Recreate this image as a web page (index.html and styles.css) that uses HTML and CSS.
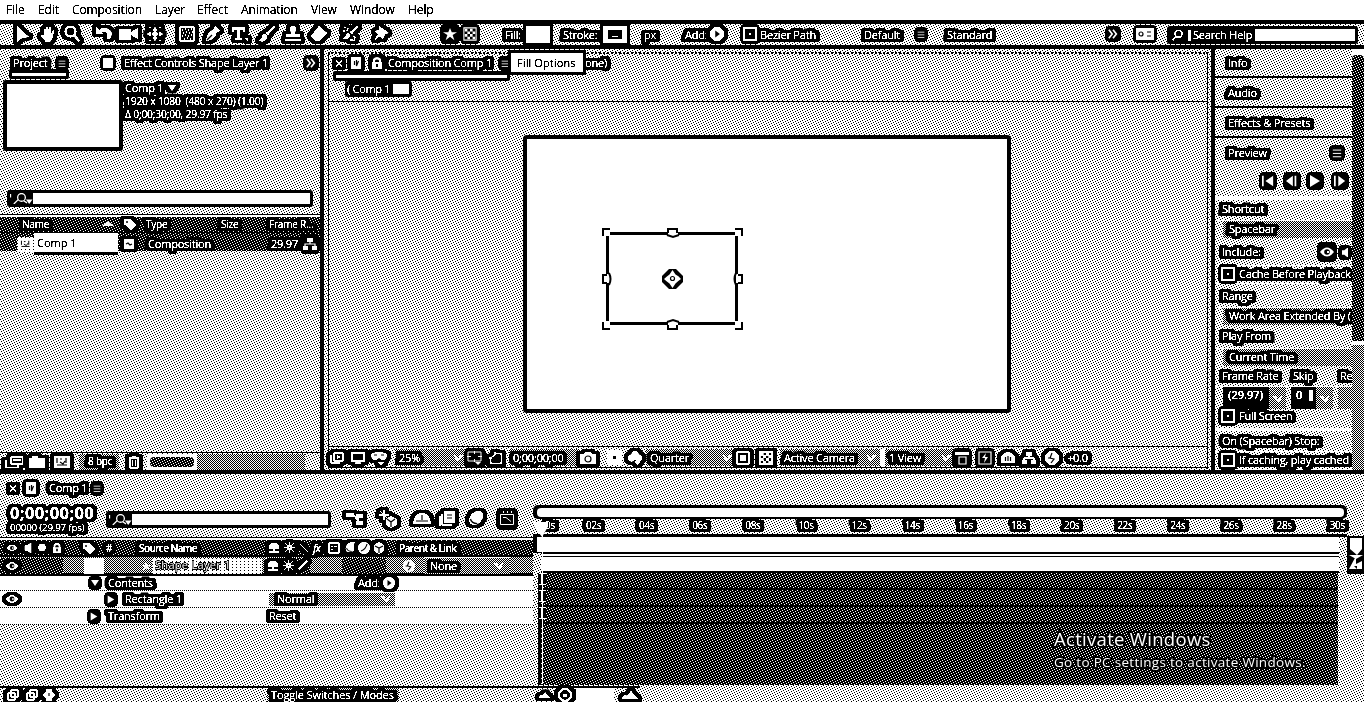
FILE: index.html
```html
<!DOCTYPE html>
<html lang="en">
<head>
<meta charset="utf-8">
<title>Comp 1</title>
<link rel="stylesheet" href="styles.css">
</head>
<body>
<svg class="defs" aria-hidden="true">
  <filter id="halo" x="-50%" y="-50%" width="200%" height="200%" color-interpolation-filters="sRGB">
    <feComponentTransfer in="SourceGraphic" result="s"><feFuncA type="linear" slope="9" intercept="-2.7"/></feComponentTransfer>
    <feColorMatrix in="s" values="0 0 0 0 0  0 0 0 0 0  0 0 0 0 0  0 0 0 1 0" result="a"/>
    <feMorphology in="a" operator="dilate" radius="4 2" result="d1"/>
    <feMorphology in="a" operator="dilate" radius="3 3" result="d2"/>
    <feMerge><feMergeNode in="d1"/><feMergeNode in="d2"/><feMergeNode in="s"/></feMerge>
  </filter>
  <filter id="crisp" color-interpolation-filters="sRGB"><feComponentTransfer><feFuncA type="linear" slope="9" intercept="-2.7"/></feComponentTransfer></filter>
  <symbol id="arrow" viewBox="0 0 16 16"><path d="M2 0v16l5-4 7-1z"/></symbol>
  <symbol id="hand" viewBox="0 0 16 16"><path d="M4 9V3q1-1 2 0v4V1q1-1 2 0v6l1-6q1-1 2 0v7l2-4q2 0 1 2l-2 7-2 3H6L1 10q0-2 3-1z"/></symbol>
  <symbol id="mag" viewBox="0 0 16 16"><circle cx="6.500" cy="5.500" r="5" class="ln"/><path d="M10 9l5 6" class="ln"/></symbol>
  <symbol id="rot" viewBox="0 0 16 16"><path d="M0 1v7h7L5 6q6-2 6 3v4h3q5-9-5-11-4 0-6 2z"/></symbol>
  <symbol id="cam" viewBox="0 0 20 16"><path d="M0 3h12v3l7-4v11l-7-4v5H0z"/></symbol>
  <symbol id="pan" viewBox="0 0 18 16"><path d="M9 0l3 4H6zM9 16l-3-4h6zM0 8l4-3v6zM18 8l-4-3v6z"/><circle cx="9" cy="8" r="3"/><path d="M2 1h2M14 1h2M2 15h2M14 15h2" class="l1"/></symbol>
  <symbol id="rect" viewBox="0 0 16 16"><path d="M1 1h14v14H1z" class="l1"/><path d="M3 4h1M6 3h1M9 4h1M12 3h1M4 7h1M7 6h1M10 7h1M13 6h1M3 10h1M6 9h1M9 10h1M12 9h1M5 13h1M8 12h1M11 13h1" class="l1"/></symbol>
  <symbol id="pen" viewBox="0 0 16 16"><path d="M10 0l5 5-4 2q0 6-9 8l-1-1Q3 5 8 4z"/><path d="M2 14l5-5" class="k"/></symbol>
  <symbol id="type" viewBox="0 0 16 16"><path d="M0 1h13v5h-2V4H8v8h2v2H3v-2h2V4H2v2H0zM13 12h3v3z"/></symbol>
  <symbol id="brush" viewBox="0 0 16 16"><path d="M15 0l-8 7 2 2 7-8zM6 8q-3 0-3 4l-3 3q8 2 8-5z"/></symbol>
  <symbol id="stamp" viewBox="0 0 16 16"><path d="M5 1q3-2 6 0l-1 7h5v3H1V8h5zM0 13h16v2H0z"/></symbol>
  <symbol id="eraser" viewBox="0 0 16 16"><path d="M8 0l8 7-8 8H5L0 10z"/></symbol>
  <symbol id="roto" viewBox="0 0 16 16"><path d="M15 0l-7 6 2 2 6-7zM7 7q-3 0-3 3l-3 3q7 1 7-4z"/><path d="M2 1l2 1M1 5h2M6 2l-1 3M11 10l2 1-1 4M8 14h3" class="l1"/></symbol>
  <symbol id="pin" viewBox="0 0 16 16"><path d="M6 0l10 7-4 1-2 5-3-3-6 5 4-7-3-3 4-1z"/></symbol>
  <symbol id="star" viewBox="0 0 16 16"><path d="M8 1l2 5h6l-5 3 2 6-5-4-5 4 2-6-5-3h6z"/></symbol>
  <symbol id="check" viewBox="0 0 16 16"><path d="M1 1h14v14H1z" class="l1"/><path d="M2 2h3v3H2zM8 2h3v3H8zM5 5h3v3H5zM11 5h3v3h-3zM2 8h3v3H2zM8 8h3v3H8zM5 11h3v3H5zM11 11h3v3h-3z"/></symbol>
  <symbol id="menu" viewBox="0 0 12 12"><path d="M1 2.500h10M1 6.500h10M1 10.500h10" class="l1"/></symbol>
  <symbol id="more" viewBox="0 0 12 12"><path d="M1 1l4 5-4 5M6 1l4 5-4 5" class="ln"/></symbol>
  <symbol id="play" viewBox="0 0 12 12"><circle cx="6" cy="6" r="6"/><path d="M4.500 3v6l4-3z" class="kf"/></symbol>
  <symbol id="cb" viewBox="0 0 14 14"><path d="M1 1h12v12H1z" class="ln"/><path d="M6 6h2v2H6z"/></symbol>
  <symbol id="sq" viewBox="0 0 10 10"><path d="M0 0h10v10H0z"/></symbol>
  <symbol id="wave" viewBox="0 0 10 10"><path d="M0 0h10v10H0z"/><path d="M2 5l2-1 2 2 2-1" class="k"/></symbol>
  <symbol id="tabi" viewBox="0 0 12 12"><path d="M1 0h10v12H1z"/><path d="M4.500 4v4M6.500 3v6l2-5" class="k"/></symbol>
  <symbol id="x" viewBox="0 0 8 8"><path d="M1 1l6 6M7 1L1 7" class="l1"/></symbol>
  <symbol id="lock" viewBox="0 0 12 12"><path d="M2 5V2q4-4 8 0v3h1v7H1V5z"/><path d="M4 5V3.500q2-2 4 0V5zM5 7h2v3H5z" class="kf"/></symbol>
  <symbol id="search" viewBox="0 0 20 10"><circle cx="10" cy="4" r="3.500" class="l1"/><path d="M7 6L3 10M12 7l3 2M0 1v3" class="l1"/><path d="M14 6h6l-3 4z"/></symbol>
  <symbol id="tag" viewBox="0 0 14 12"><path d="M1 1h6l6 6-5 5-7-6z"/><circle cx="4" cy="4" r="1" class="kf"/></symbol>
  <symbol id="up" viewBox="0 0 12 5"><path d="M0 5l6-5 6 5z"/></symbol>
  <symbol id="tree" viewBox="0 0 14 14"><path d="M4 1h6v4H4zM0 9h5v4H0zM9 9h5v4H9z"/><path d="M7 4v3M2 10V7h10v3" class="l1"/></symbol>
  <symbol id="foot" viewBox="0 0 18 12"><path d="M6 1h12v7H6zM1 4v8h12V9" class="l1"/><path d="M8 4h8" class="ln"/></symbol>
  <symbol id="folder" viewBox="0 0 16 12"><path d="M0 2h3V0h6v2h7v10H0z"/></symbol>
  <symbol id="img" viewBox="0 0 16 12"><path d="M0 0h16v12H0z"/><path d="M3 2v5M6 3h2M12 2v5M3 9h10M6 6l3 2 2-3" class="k"/></symbol>
  <symbol id="trash" viewBox="0 0 12 14"><path d="M1 3h10M4 2h4M2 4v9h8V4M4.500 5v6M7.500 5v6" class="l1"/></symbol>
  <symbol id="mon" viewBox="0 0 16 14"><path d="M1 1h14v9H1z" class="ln"/><path d="M5 12h6v2H5z"/></symbol>
  <symbol id="stack" viewBox="0 0 14 12"><path d="M4 1h9v8H4zM1 3v8h9" class="l1"/><path d="M7 3v4l4-2z"/></symbol>
  <symbol id="mask" viewBox="0 0 16 14"><path d="M0 3q8-4 16 0 0 6-5 6L8 7 5 9Q0 9 0 3z"/><path d="M3 4h3M10 4h3" class="k"/><path d="M7 11h6l-3 3z"/></symbol>
  <symbol id="crop" viewBox="0 0 16 14"><path d="M1 1h13v9H1zM7.500 0v3M7.500 8v3M0 5.500h4M11 5.500h4" class="thin"/><path d="M8 11h6l-3 3z"/></symbol>
  <symbol id="region" viewBox="0 0 16 14"><path d="M2 13V7l6-5h6v11zM0 7h3M7 0v3" class="l1"/></symbol>
  <symbol id="photo" viewBox="0 0 16 12"><path d="M0 2h4l1-2h6l1 2h4v10H0z"/><circle cx="8" cy="7" r="3" class="k"/></symbol>
  <symbol id="club" viewBox="0 0 16 16"><circle cx="8" cy="4" r="4"/><circle cx="4" cy="8" r="4"/><circle cx="12" cy="8" r="4"/><path d="M7 12h7l-3 4z"/></symbol>
  <symbol id="view" viewBox="0 0 14 14"><path d="M1 1h12v12H1z" class="l1"/><path d="M4 4h6v6H4z"/></symbol>
  <symbol id="dup" viewBox="0 0 14 14"><path d="M0 1h14v3H0z"/><path d="M4 6h7v7H4z" class="l1"/></symbol>
  <symbol id="bolt" viewBox="0 0 14 14"><path d="M1 1h12v12H1z" class="l1"/><path d="M8 2L4 7h3l-1 5 4-6H7z"/></symbol>
  <symbol id="bars" viewBox="0 0 14 14"><path d="M0 6q7-10 14 0v6H0z"/><path d="M4.500 6v4M7 5v5M9.500 6v4" class="k"/></symbol>
  <symbol id="iris" viewBox="0 0 14 14"><circle cx="7" cy="7" r="7"/><path d="M7 2L5 7l4 1-3 4M3 7h3" class="k"/></symbol>
  <symbol id="first" viewBox="0 0 14 12"><path d="M0 0h2v12H0zM13 0v12L4 6z"/></symbol>
  <symbol id="prev" viewBox="0 0 14 12"><path d="M8 0v12L0 6zM10 0h2v12h-2z"/></symbol>
  <symbol id="tri" viewBox="0 0 12 12"><path d="M1 0l10 6-10 6z"/></symbol>
  <symbol id="next" viewBox="0 0 14 12"><path d="M0 0h2v12H0zM5 0l8 6-8 6z"/></symbol>
  <symbol id="eye" viewBox="0 0 14 10"><path d="M0 5q7-9 14 0-7 9-14 0z"/><circle cx="7" cy="5" r="2.800" class="kf"/><path d="M7 4h2v2H7z"/></symbol>
  <symbol id="spk" viewBox="0 0 8 12"><path d="M0 3h3l5-4v14L3 9H0z"/></symbol>
  <symbol id="down" viewBox="0 0 8 6"><path d="M0 0h8L4 6z"/></symbol>
  <symbol id="chev" viewBox="0 0 10 6"><path d="M1 0l4 5 4-5" class="ln"/></symbol>
  <symbol id="shy" viewBox="0 0 14 12"><path d="M1 7q0-7 6-7t6 7H8v3h5v2H1v-2h5V7z"/></symbol>
  <symbol id="sun" viewBox="0 0 11 11"><path d="M5 0h1v3h2l1-2h1v1L8 3v2h3v1H8v2l2 1v1H9L8 8H6v3H5V8H3l-1 2H1V9l2-1V6H0V5h3V3L1 2V1h1l1 2h2z"/><path d="M5 5h1v1H5z" class="kf"/></symbol>
  <symbol id="slash" viewBox="0 0 12 12"><path d="M1 11L11 1" class="ln"/></symbol>
  <symbol id="bslash" viewBox="0 0 12 12"><path d="M1 1l10 10" class="l1"/></symbol>
  <symbol id="frame" viewBox="0 0 12 12"><path d="M1 1h10v10H1z" class="l1"/><path d="M3 4h2v1H3zM6 4h3v1H6zM3 7h2v1H3z"/></symbol>
  <symbol id="blob" viewBox="0 0 14 14"><ellipse cx="8" cy="6" rx="7" ry="5" transform="rotate(-45 8 6)"/><path d="M3 7q1 4 6 4" class="k"/></symbol>
  <symbol id="half" viewBox="0 0 12 12"><circle cx="6" cy="6" r="6"/><path d="M9 2q-1 5-6 7" class="k"/></symbol>
  <symbol id="dot" viewBox="0 0 12 12"><circle cx="6" cy="6" r="5.500"/></symbol>
  <symbol id="cube" viewBox="0 0 12 12"><path d="M6 0l5 3v6l-5 3-5-3V3z"/><path d="M2 4l4 2 4-2M6 6v5" class="k"/></symbol>
  <symbol id="flow" viewBox="0 0 18 14"><path d="M0 1h8v4H0zM10 2h7v4h-7zM10 9h7v4h-7z"/><path d="M8 3l5 8M12 6v4" class="l1"/></symbol>
  <symbol id="draft" viewBox="0 0 18 18"><path d="M5 0v10M0 5h10M1 1l8 8" class="thin"/><path d="M12 6l6 3v6l-6 3-5-3V9z"/><path d="M8 9l4 3 4-3M12 12v5" class="k"/></symbol>
  <symbol id="dome" viewBox="0 0 18 14"><path d="M0 12Q1 1 9 1t9 11z"/><path d="M9 3v5M3 9h12" class="k"/></symbol>
  <symbol id="pages" viewBox="0 0 16 16"><path d="M5 0h11v12H5z"/><path d="M3 3v11h10M1 5v10" class="l1"/><path d="M8 4h5M8 7h5" class="k"/></symbol>
  <symbol id="graph" viewBox="0 0 16 16"><path d="M1.500 3.500h13v10h-13zM4 6.500h3l5 4M4.500 0v2M8.500 0v2M12.500 0v2" class="thin"/></symbol>
  <symbol id="mtn" viewBox="0 0 16 8"><path d="M0 8q2-6 5-3l4-5 7 8z"/></symbol>
  <symbol id="ring" viewBox="0 0 14 14"><circle cx="7" cy="7" r="6" class="ln"/><path d="M5 6h4v3H5z"/></symbol>
  <symbol id="sb" viewBox="0 0 12 12"><path d="M1 4h7v7H1zM4 1h7v7H4z" class="l1"/></symbol>
  <symbol id="key" viewBox="0 0 12 12"><path d="M3 0h6v3l3 3-3 3v3H3V9L0 6l3-3z"/><path d="M6 4v3" class="k"/></symbol>
  <symbol id="ws" viewBox="0 0 18 12"><path d="M0 0h18v12H0z"/><circle cx="5" cy="6" r="2" class="k"/><path d="M11 4h4M11 8h4" class="k"/></symbol>
</svg>

<nav class="menu"><span>File</span><span>Edit</span><span>Composition</span><span>Layer</span><span>Effect</span><span>Animation</span><span>View</span><span>Window</span><span>Help</span></nav>

<header class="tools light">
  <svg class="i"><use href="#arrow"/></svg><svg class="i"><use href="#hand"/></svg><svg class="i"><use href="#mag"/></svg><svg class="i"><use href="#rot"/></svg><svg class="i w20"><use href="#cam"/></svg><svg class="i"><use href="#pan"/></svg><svg class="i"><use href="#rect"/></svg><svg class="i"><use href="#pen"/></svg><svg class="i"><use href="#type"/></svg><svg class="i"><use href="#brush"/></svg><svg class="i"><use href="#stamp"/></svg><svg class="i"><use href="#eraser"/></svg><svg class="i"><use href="#roto"/></svg><svg class="i"><use href="#pin"/></svg><svg class="i s14 bb"><use href="#star"/></svg><svg class="i s14 bb"><use href="#check"/></svg>
  <span class="t">Fill:</span><i class="swatch"></i><span class="t">Stroke:</span><i class="swatch stroke"></i><span class="t">px</span><span class="t">Add:</span><svg class="i s14"><use href="#play"/></svg><svg class="i s14 bb"><use href="#cb"/></svg><span class="t">Bezier Path</span><span class="t">Default</span><svg class="i s8 bb"><use href="#menu"/></svg><span class="t">Standard</span><svg class="i s10 bb"><use href="#more"/></svg><svg class="i ws bb"><use href="#ws"/></svg>
  <div class="help"><svg class="i"><use href="#mag"/></svg><b></b><span>Search Help</span><em></em></div>
</header>

<main class="top">
  <section class="project light">
    <div class="ptabs"><span class="t">Project</span><svg class="i s8 bb"><use href="#menu"/></svg><svg class="i s10 bb"><use href="#sq"/></svg><span class="t">Effect Controls Shape Layer 1</span><svg class="i s10 bb"><use href="#more"/></svg></div>
    <div class="under u1"></div>
    <div class="info"><div class="thumb"></div><div class="meta"><div><span class="t">Comp 1</span><svg class="i s8 dnt"><use href="#down"/></svg></div><span class="t">1920 x 1080&nbsp; (480 x 270) (1.00)</span><span class="t">Δ 0;00;30;00, 29.97 fps</span></div></div>
    <div class="find f1"><svg><use href="#search"/></svg><b></b></div>
    <div class="cols dark"><span class="n">Name</span><svg class="up"><use href="#up"/></svg><svg class="i s14"><use href="#tag"/></svg><span class="n">Type</span><span class="n">Size</span><span class="n">Frame R...</span></div>
    <div class="item dark"><i class="pale"><svg><use href="#img"/></svg></i><span class="name"><span>Comp 1</span></span><svg class="i s10"><use href="#wave"/></svg><span class="n">Composition</span><span class="n">29.97</span><svg class="i s14 bb"><use href="#tree"/></svg></div>
    <div class="pfoot"><svg class="i foot"><use href="#foot"/></svg><svg class="i s16"><use href="#folder"/></svg><svg class="i s16"><use href="#img"/></svg><i class="mid"><span class="n">8 bpc</span></i><svg class="i s14"><use href="#trash"/></svg><i class="slot"><b class="dark"></b></i><i class="mid"></i></div>
  </section>

  <section class="comp light">
    <div class="inner">
      <div class="ctabs"><svg class="i s8"><use href="#x"/></svg><svg class="i s12 bb"><use href="#tabi"/></svg><svg class="i s12 bb"><use href="#lock"/></svg><span class="t">Composition Comp 1</span><svg class="i s8 bb"><use href="#menu"/></svg><span class="t">one)</span></div>
      <div class="under u2"></div>
      <div class="crumb"><span>( Comp 1</span><b></b></div>
      <div class="stage">
        <div class="canvas">
          <svg class="shape" viewBox="0 0 142 102"><path d="M5.500 5.500h129v90h-129z" class="ks"/><path class="wf" d="M2 2h6v6H2zM66 2h10v5H66zM133 2h6v6h-6zM2 46h5v9H2zM134 46h5v9h-5zM2 93h6v6H2zM66 94h10v5H66zM133 93h6v6h-6z"/><path class="k1" d="M1 8V1h7M66 5V1h9v4M133 1h7v7M5 47H1v8h4M136 47h4v8h-4M1 94v7h7M66 97v4h9v-4M133 101h7v-7M65 7l6 2 6-2M7 45q3 6 0 12M134 45q-3 6 0 12M65 94l6-2 6 2"/><path d="M67 41h7l7 7v6l-7 7h-7l-7-7v-6z" class="kf"/><path d="M70.500 42l3 4.500q3 1 5.500 4.500-3 2-5.500 4.500l-3 4.500-3-4.500q-3-2-5.500-4.500 3-3 5.500-4.500z" class="wf"/><circle cx="70.500" cy="50.500" r="2" class="k"/></svg>
        </div>
      </div>
      <div class="cfoot"><svg class="i s14"><use href="#stack"/></svg><svg class="i s14"><use href="#mon"/></svg><svg class="i s16"><use href="#mask"/></svg><i class="mid"><span class="t">25%</span><svg><use href="#chev"/></svg></i><svg class="i s16 bb"><use href="#crop"/></svg><svg class="i s14"><use href="#region"/></svg><i class="mid"><span class="t">0;00;00;00</span></i><svg class="i s16"><use href="#photo"/></svg><i class="pt"></i><svg class="i s14"><use href="#club"/></svg><i class="mid"><span class="t">Quarter</span><svg><use href="#chev"/></svg></i><svg class="i s14"><use href="#view"/></svg><svg class="i s14"><use href="#check"/></svg><i class="mid"><span class="t">Active Camera</span><svg><use href="#chev"/></svg></i><i class="mid"><span class="t">1 View</span><svg><use href="#chev"/></svg></i><svg class="i s14 bb"><use href="#dup"/></svg><svg class="i s14 bb"><use href="#bolt"/></svg><svg class="i s14"><use href="#bars"/></svg><svg class="i s14"><use href="#tree"/></svg><svg class="i s14"><use href="#iris"/></svg><span class="t">+0.0</span></div>
    </div>
    <div class="tip"><span>Fill Options</span></div>
  </section>

  <aside class="side light">
    <div class="panels">
      <div class="sec"><span class="t">Info</span></div><div class="sec"><span class="t">Audio</span></div><div class="sec"><span class="t">Effects &amp; Presets</span></div>
      <div class="sec last"><span class="t">Preview</span><svg class="i s10 bb"><use href="#menu"/></svg></div>
      <div class="trans"><svg class="i s12 bb"><use href="#first"/></svg><svg class="i s12 bb"><use href="#prev"/></svg><svg class="i s12 bb"><use href="#tri"/></svg><svg class="i s12 bb"><use href="#next"/></svg></div>
      <div class="r r18"><span class="t">Shortcut</span></div>
      <div class="drop mid"><span class="t">Spacebar</span></div>
      <div class="r incl"><span class="t">Include:</span><svg class="i s14 bb"><use href="#eye"/></svg><svg class="i s8 bb"><use href="#spk"/></svg></div>
      <div class="r ck"><svg class="i s14 bb"><use href="#cb"/></svg><span class="t">Cache Before Playback</span></div>
      <div class="r rng"><span class="t">Range</span></div>
      <div class="drop mid"><span class="t">Work Area Extended By (</span></div>
      <div class="r r24"><span class="t">Play From</span></div>
      <div class="drop mid"><span class="t">Current Time</span></div>
      <div class="r three"><span class="t">Frame Rate</span><span class="t">Skip</span><span class="t">Re</span></div>
      <div class="nums"><b><span>(29.97)</span></b><i class="mid"><svg><use href="#chev"/></svg></i><b><span>0</span><em></em></b><i class="mid"><svg><use href="#chev"/></svg></i><i class="mid"></i></div>
      <div class="r ck full"><svg class="i s14 bb"><use href="#cb"/></svg><span class="t">Full Screen</span></div>
      <div class="r stop"><span class="t">On (Spacebar) Stop:</span></div>
      <div class="r ck fin"><svg class="i s14 bb"><use href="#cb"/></svg><span class="t">If caching, play cached</span></div>
    </div>
    <div class="scroll"><b class="dark"></b><i class="mid"></i></div>
  </aside>
</main>

<section class="timeline light">
  <div class="left">
    <div class="ttab"><svg class="i s8"><use href="#x"/></svg><svg class="i s12 bb"><use href="#tabi"/></svg><span class="t">Comp 1</span><svg class="i s8 bb"><use href="#menu"/></svg></div>
    <div class="tctl"><div class="tc"><span class="t big">0;00;00;00</span><span class="t tiny">00000 (29.97 fps)</span></div><div class="find f2"><svg><use href="#search"/></svg><b></b></div><svg class="i s18"><use href="#flow"/></svg><svg class="i s18"><use href="#draft"/></svg><svg class="i s18"><use href="#dome"/></svg><svg class="i s16"><use href="#pages"/></svg><svg class="i s16"><use href="#blob"/></svg><svg class="i s16 bb"><use href="#graph"/></svg></div>
    <div class="lhead dark"><svg class="i s10"><use href="#eye"/></svg><svg class="i s10"><use href="#spk"/></svg><svg class="i s8"><use href="#dot"/></svg><svg class="i s10"><use href="#lock"/></svg><svg class="i s14"><use href="#tag"/></svg><span class="n">#</span><span class="n">Source Name</span><svg class="i s12"><use href="#shy"/></svg><svg class="i s11"><use href="#sun"/></svg><svg class="i s10"><use href="#bslash"/></svg><em class="n">fx</em><svg class="i s12"><use href="#frame"/></svg><svg class="i s12"><use href="#blob"/></svg><svg class="i s12"><use href="#half"/></svg><svg class="i s12"><use href="#cube"/></svg><span class="n">Parent &amp; Link</span></div>
    <div class="lrow mid"><i class="c dark"><svg class="i s12"><use href="#eye"/></svg></i><i class="c dark blk"></i><i class="wh"></i><svg class="i s10 nf"><use href="#star"/></svg><i class="pale nm"><span>Shape Layer 1</span></i><i class="c dark sw"><svg class="i s12"><use href="#shy"/></svg><svg class="i s11"><use href="#sun"/></svg><svg class="i s10"><use href="#slash"/></svg></i><i class="c dark blk2"></i><svg class="i s12 nf"><use href="#iris"/></svg><i class="mid par"><span class="t">None</span><svg><use href="#chev"/></svg></i></div>
    <div class="prop p1"><svg class="i s8 dn bb"><use href="#down"/></svg><span class="t">Contents</span><span class="t">Add:</span><svg class="i s12"><use href="#play"/></svg></div>
    <div class="prop p2"><svg class="i s12"><use href="#eye"/></svg><svg class="i s8 bb"><use href="#tri"/></svg><span class="t">Rectangle 1</span><i class="mid"><span class="t">Normal</span><svg><use href="#chev"/></svg></i></div>
    <div class="prop p3"><svg class="i s8 bb"><use href="#tri"/></svg><span class="t">Transform</span><span class="t">Reset</span></div>
    <div class="tfoot"><svg class="i s12"><use href="#sb"/></svg><svg class="i s12"><use href="#sb"/></svg><svg class="i s12"><use href="#key"/></svg><i class="mid"><span class="t">Toggle Switches / Modes</span></i></div>
  </div>
  <div class="right">
    <div class="nav"><b></b></div>
    <div class="ruler"><span class="t">0s</span><span class="t">02s</span><span class="t">04s</span><span class="t">06s</span><span class="t">08s</span><span class="t">10s</span><span class="t">12s</span><span class="t">14s</span><span class="t">16s</span><span class="t">18s</span><span class="t">20s</span><span class="t">22s</span><span class="t">24s</span><span class="t">26s</span><span class="t">28s</span><span class="t">30s</span></div>
    <div class="work"></div>
    <div class="layerbar"></div>
    <div class="tracks dark"><i></i><i></i><i></i><div class="act"><span class="a1">Activate Windows</span><span class="a2">Go to PC settings to activate Windows.</span></div></div>
    <div class="zoombar"><svg class="i mt"><use href="#mtn"/></svg><svg class="i s14"><use href="#ring"/></svg><b></b><svg class="i mt2"><use href="#mtn"/></svg></div>
    <div class="cti"></div>
  </div>
  <div class="gutter"><svg viewBox="0 0 17 38" preserveAspectRatio="none"><path d="M0 0h17v38H0z" class="kf"/><path d="M3 2h12v11l-5 6-7-6zM2 19l7 4 7-4M9 20l-7 13h13v-8l-6 3M7 30h3v3"/></svg></div>
</section>
</body>
</html>
```
FILE: styles.css
```css
* { box-sizing: border-box; }
body { margin: 0; width: 1364px; height: 702px; overflow: hidden; background: #fff; color: #000; font: 11px/14px "Open Sans", "Noto Sans", sans-serif; }
i { font-style: normal; }
i, b { display: block; }
.defs { position: absolute; width: 0; height: 0; }

/* one-pixel screens of three densities */
.light { --k: conic-gradient(at 1px 1px, #0000 75%, #000 0); background: var(--k) 0 0/5px 5px, var(--k) 1px 2px/5px 5px, var(--k) 2px 4px/5px 5px, var(--k) 3px 1px/5px 5px, var(--k) 4px 3px/5px 5px, #fff; }
.dark { --w: conic-gradient(at 1px 1px, #0000 75%, #fff 0); background: var(--w) 0 0/5px 5px, var(--w) 1px 2px/5px 5px, var(--w) 2px 4px/5px 5px, var(--w) 3px 1px/5px 5px, var(--w) 4px 3px/5px 5px, #000; }
.mid { background: conic-gradient(#000 25%, #fff 0 50%, #000 0 75%, #fff 0) 0 0/2px 2px; }
.pale { background: conic-gradient(at 1px 1px, #fff 75%, #000 0) 0 0/4px 3px; }

.i { width: 16px; height: 16px; overflow: visible; fill: #fff; filter: url(#halo); display: block; }
.i.w20 { width: 20px; }
.i.ws { width: 18px; height: 12px; margin-left: -2px; }
.i.s18 { width: 18px; height: 18px; }
.i.s14 { width: 14px; height: 14px; }
.i.s12 { width: 12px; height: 12px; }
.i.s11 { width: 11px; height: 11px; }
.i.s10 { width: 10px; height: 10px; }
.i.s8 { width: 8px; height: 9px; }
.i.bb { filter: url(#crisp); background: #000; box-shadow: 0 0 0 3px #000; border-radius: 2px; }
.i.nf { filter: url(#crisp); }
.ln { fill: none; stroke: #fff; stroke-width: 2; }
.l1 { fill: none; stroke: #fff; stroke-width: 1.2; }
.thin { fill: none; stroke: #fff; stroke-width: 1; }
.k { fill: none; stroke: #000; stroke-width: 1.2; }
.kf { fill: #000; }
.t, .n { color: #fff; white-space: nowrap; justify-self: start; filter: url(#halo); letter-spacing: -.2px; }
.n { font-size: 10px; }
.mid > svg:not(.i) { width: 10px; height: 6px; filter: url(#crisp); }

.menu { height: 24px; border-bottom: 4px solid #000; display: grid; grid-template-columns: 32px 34px 83px 42px 44px 70px 39px 58px 40px; padding-left: 6px; align-items: center; font-size: 12px; }
.menu span { filter: url(#crisp); letter-spacing: -.1px; }

.tools { height: 25px; border-bottom: 4px solid #000; padding: 0 0 2px 15px; display: grid; align-items: center; grid-template-columns: 25px 24px 32px 23px 28px 32px 26px 27px 27px 26px 26px 31px 31px 70px 20px 42px 21px 37px 40px 41px 41px 25px 33px 17px 104px 53px 30px 161px 30px 29px 191px; }
.tools .t { position: relative; top: 0; margin-top: 1px; }
.swatch { width: 24px; height: 17px; background: #fff; outline: 3px solid #000; }
.swatch.stroke { border: 5px solid #fff; border-width: 4px 5px; background: repeating-linear-gradient(#000 0 4px, #fff 4px 5px) content-box, #000; padding: 2px 4px; }
.help { height: 18px; width: 191px; border: 3px solid #000; border-radius: 3px; background: #000; display: flex; align-items: center; color: #fff; margin-top: 2px; }
.help .i { width: 11px; height: 11px; transform: scaleX(-1); margin: 0 5px 0 2px; }
.help b { width: 3px; height: 11px; background: #fff; margin-right: 2px; }
.help span { filter: url(#crisp); letter-spacing: -.2px; }
.help em { flex: 1; height: 12px; background: #fff; margin-left: 3px; }

.top { display: grid; grid-template-columns: 324px 891px 149px; height: 425px; border-bottom: 4px solid #000; }
.project { border-right: 4px solid #000; height: 421px; display: flex; flex-direction: column; }
.ptabs { height: 20px; padding: 7px 0 0 13px; display: grid; align-items: center; grid-template-columns: 45px 45px 21px 182px 12px; }
.ptabs .t { letter-spacing: -.2px; }
.under { height: 10px; border: solid #000; border-width: 4px 3px 3px; background: #fff; border-radius: 2px; }
.u1 { margin-left: 9px; width: 60px; }
.info { display: flex; height: 72px; margin-top: 1px; padding-left: 3px; }
.thumb { width: 120px; height: 71px; border: 4px solid #000; background: #fff; border-radius: 3px; }
.meta { padding: 1px 0 0 2px; display: flex; flex-direction: column; align-items: start; }
.meta > * { height: 13px; line-height: 14px; font-size: 10.300px; }
.meta > div { display: flex; gap: 5px; align-items: center; font-size: 11px; }
.meta .dnt { height: 6px; }
.find { background: #000; border-radius: 3px; border: 3px solid #000; display: flex; }
.find svg { width: 23px; height: 11px; fill: #fff; }
.find b { background: #fff; flex: 1; }
.f1 { margin: 38px 0 0 7px; width: 306px; height: 17px; }
.cols { margin-top: 7px; height: 18px; border-top: 1px solid #000; box-shadow: inset 0 2px #fff; padding-left: 22px; display: grid; align-items: center; grid-template-columns: 80px 21px 23px 75px 48px 50px; }
.cols .up { width: 12px; height: 5px; fill: #fff; }
.item { height: 19px; border-top: 1px solid #000; padding-left: 17px; display: grid; align-items: center; grid-template-columns: 17px 90px 24px 123px 32px 14px; }
.item .pale { height: 15px; width: 17px; padding: 2px; }
.item .pale svg { width: 13px; height: 10px; fill: #fff; display: block; }
.name { background: #fff; width: 84px; height: 22px; border-bottom: 3px solid #000; padding: 3px 0 0 3px; align-self: start; }
.name span { filter: url(#crisp); display: block; }
.item .n { font-size: 11px; }
.pfoot { margin-top: auto; height: 18px; border-top: 1px solid #000; display: grid; align-items: center; grid-template-columns: 24px 25px 26px 47px 21px 50px 108px; padding-left: 4px; }
.pfoot > .i { margin-left: 1px; }
.pfoot .foot { width: 18px; height: 12px; }
.pfoot > .mid { height: 16px; width: 40px; padding-left: 9px; }
.pfoot > .mid:last-child { width: 108px; }
.slot { background: #fff; height: 16px; padding: 3px 3px; }
.slot b { height: 10px; border-radius: 4px; }

.comp { position: relative; height: 421px; border-right: 4px solid #000; padding: 3px 3px 1px 4px; }
.inner { border: 1px solid #000; border-top: 2px dotted #000; border-bottom: 0; height: 417px; display: flex; flex-direction: column; }
.ctabs { height: 17px; padding: 1px 0 0 6px; display: grid; align-items: center; grid-template-columns: 15px 21px 17px 113px 84px 40px; }
.u2 { margin-left: 4px; width: 177px; }
.crumb { display: flex; align-items: center; background: #000; width: 67px; height: 16px; margin: 0 0 0 16px; padding: 3px 3px 3px 2px; border-radius: 3px; color: #fff; }
.crumb span { filter: url(#crisp); letter-spacing: -.3px; width: 46px; white-space: nowrap; }
.crumb b { flex: 1; height: 10px; background: #fff; }
.stage { border-top: 1px solid #000; border-bottom: 1px solid #000; margin-top: 4px; height: 346px; padding: 33px 0 0 194px; }
.canvas { width: 488px; height: 278px; border: 4px solid #000; border-radius: 4px; background: #fff; padding: 89px 0 0 75px; }
.shape { width: 142px; height: 102px; display: block; }
.ks { fill: none; stroke: #000; stroke-width: 3; }
.k1 { fill: none; stroke: #000; stroke-width: 2; }
.wf { fill: #fff; }
.cfoot { height: 20px; margin-top: 1px; display: grid; align-items: center; grid-template-columns: 21px 20px 24px 72px 22px 20px 71px 30px 18px 18px 90px 23px 21px 100px 75px 23px 23px 21px 23px 22px 30px; padding-left: 1px; border-bottom: 1px solid #000; }
.cfoot .mid { height: 17px; display: flex; align-items: center; justify-content: space-between; padding: 0 4px; }
.cfoot .i.s16 { height: 14px; }
.cfoot .mid + .mid { border-left: 5px solid #fff; }
.cfoot .pt { width: 3px; height: 3px; background: #000; outline: 6px solid #fff; margin-left: 3px; }
.tip { position: absolute; left: 184px; top: 1px; width: 78px; height: 25px; border: 3px solid #000; background: #fff; padding: 3px 0 0 6px; }
.tip span { filter: url(#crisp); white-space: nowrap; display: block; letter-spacing: .1px; }

.side { height: 421px; display: flex; overflow: hidden; }
.panels { width: 137px; overflow: hidden; }
.sec { height: 30px; padding: 8px 0 0 13px; border-bottom: 2px solid #000; }
.sec:first-child { height: 29px; padding-top: 7px; }
.last { border: 0; display: flex; justify-content: space-between; padding-right: 10px; height: 25px; }
.last .i { margin-top: 2px; }
.trans { height: 37px; display: grid; grid-template-columns: 24px 23px 25px 12px; padding: 12px 0 0 47px; border-bottom: 4px solid #fff; align-items: start; }
.r { height: 24px; padding-left: 7px; display: flex; align-items: center; border-bottom: 1px solid #fff; }
.r18 { height: 21px; padding-bottom: 2px; }
.drop { margin-left: 8px; height: 17px; padding: 1px 0 0 6px; }
.incl { height: 27px; margin-top: 1px; display: grid; grid-template-columns: 98px 21px 8px; }
.ck { height: 18px; gap: 4px; padding-left: 6px; padding-bottom: 1px; }
.rng { height: 24px; }
.r24 { height: 24px; padding-bottom: 2px; }
.r.ck.fin { height: 18px; padding-bottom: 2px; }
.three { height: 21px; display: grid; grid-template-columns: 71px 47px 20px; }
.nums { height: 17px; display: grid; grid-template-columns: 46px 22px 25px 22px 14px; padding-left: 8px; }
.nums b { background: #000; padding: 1px 3px 0 5px; display: flex; justify-content: space-between; color: #fff; }
.nums b span { filter: url(#crisp); font-weight: 600; }
.nums em { width: 4px; height: 11px; margin-top: 2px; background: #fff; }
.nums .mid { width: 17px; padding: 4px; }
.full { height: 24px; border: 0; }
.stop { height: 24px; border-top: 3px solid #fff; }
.scroll { width: 12px; padding-top: 6px; background: #fff; }
.scroll b { height: 286px; border-radius: 4px 4px 0 0; }
.scroll i { height: 125px; margin-top: 4px; }

.timeline { height: 228px; display: grid; grid-template-columns: 533px 814px 17px; }
.left { display: flex; flex-direction: column; }
.ttab { height: 27px; padding: 1px 0 0 9px; display: grid; align-items: center; grid-template-columns: 16px 24px 44px 12px; }
.tctl { height: 36px; padding-left: 10px; display: grid; align-items: center; grid-template-columns: 96px 240px 33px 34px 26px 28px 32px 20px; }
.tc { display: flex; flex-direction: column; align-items: start; }
.big { font: bold 16.500px/17px "Open Sans", sans-serif; letter-spacing: .4px; height: 18px; }
.tiny { font-size: 9.800px; line-height: 12px; height: 12px; }
.f2 { width: 225px; height: 17px; }
.lhead { height: 18px; border-top: 1px solid #000; box-shadow: inset 0 2px #fff; padding: 2px 0 0 7px; display: grid; align-items: center; grid-template-columns: 16px 15px 14px 30px 24px 33px 129px 16px 15px 14px 15px 16px 14px 15px 26px 80px; }
.lhead .n { font-weight: 600; letter-spacing: -.6px; }
.lrow { height: 21px; border: solid #000; border-width: 2px 0 3px; display: grid; align-items: center; grid-template-columns: 35px 43px 60px 14px 114px 76px 58px 24px 86px; }
.lrow .c { height: 16px; padding: 2px 6px; }
.lrow .blk { width: 28px; }
.lrow .blk2 { width: 44px; }
.lrow .wh { width: 20px; height: 16px; background: #fff; margin-left: 6px; }
.lrow .nm { height: 16px; width: 110px; padding: 0 3px; }
.lrow .nm span { display: block; color: #fff; -webkit-text-stroke: 1.500px #000; paint-order: stroke fill; letter-spacing: .3px; filter: url(#crisp); }
.lrow .sw { width: 44px; display: flex; gap: 4px; padding: 2px 1px; }
.lrow .nf { margin-left: 3px; }
.par { height: 17px; display: flex; justify-content: space-between; align-items: center; padding: 0 6px; border-top: 1px solid #fff; }
.prop { height: 17px; background: #fff; border-bottom: 1px dotted #000; display: grid; align-items: center; }
.p1 { height: 15px; padding-left: 91px; grid-template-columns: 17px 250px 25px 12px; }
.p1 .dn { height: 8px; }
.p2 { padding-left: 6px; grid-template-columns: 101px 18px 144px 126px; }
.p2 .mid { height: 13px; display: flex; align-items: center; justify-content: space-between; padding: 0 4px 0 8px; }
.p3 { padding-left: 90px; grid-template-columns: 18px 161px 40px; }
.tfoot { margin-top: auto; height: 16px; border-top: 2px solid #000; display: grid; align-items: center; padding-left: 7px; grid-template-columns: 19px 17px 224px 132px; }
.tfoot .mid { height: 14px; padding-left: 4px; }
.tfoot .t { letter-spacing: -.12px; }

.right { position: relative; display: flex; flex-direction: column; }
.nav { margin-top: 31px; height: 14px; background: #000; border-radius: 5px; padding: 3px 3px 2px 4px; }
.nav b { height: 9px; background: #fff; border-radius: 4px; }
.ruler { height: 18px; border-bottom: 3px solid #000; display: grid; grid-template-columns: 44px repeat(15, 53.130px); align-items: center; }
.ruler .t { font-size: 10px; line-height: 11px; justify-self: center; transform: translate(-10px, -1px); letter-spacing: -.3px; }
.ruler .t:first-child { transform: translate(-5px, -1px); }
.work { height: 16px; background: #fff; border-left: 4px solid #000; border-bottom: 1px solid #000; margin-right: 8px; }
.layerbar { height: 20px; background: #fff; border-top: 4px double #000; border-bottom: 2px solid #000; margin: 0 8px 0 8px; }
.tracks { height: 112px; margin: 0 9px 0 5px; position: relative; border-left: 3px solid #000; }
.tracks i { height: 17px; border-bottom: 2px solid #000; }
.tracks i::before { content: ""; display: block; width: 7px; height: 12px; margin-left: -2px; background: linear-gradient(#fff, #fff) 0 0/100% 1px no-repeat, linear-gradient(#fff, #fff) 0 100%/100% 1px no-repeat, linear-gradient(#fff, #fff) 2px 0/2px 100% no-repeat, #000; }
.act { display: flex; flex-direction: column; padding: 4px 0 0 513px; color: #fff; white-space: nowrap; }
.act span { filter: url(#crisp); -webkit-text-stroke: 3px #000; paint-order: stroke fill; }
.a1 { font-size: 18.500px; line-height: 22px; letter-spacing: .3px; }
.a2 { font-size: 13.500px; line-height: 24px; letter-spacing: .3px; }
.zoombar { margin-top: auto; height: 16px; width: 107px; border-top: 2px solid #000; display: grid; align-items: center; grid-template-columns: 19px 18px 46px 20px; padding-left: 6px; }
.zoombar b { height: 14px; width: 38px; background: #fff; }
.zoombar .mt { width: 11px; height: 6px; }
.zoombar .mt2 { width: 16px; height: 8px; }
/* playhead laid over ruler and tracks */
.cti { position: absolute; left: 1px; top: 48px; width: 16px; height: 162px; background: linear-gradient(#fff, #fff) 8px 0/1px 100% no-repeat; }
.cti::before { content: ""; display: block; width: 14px; height: 15px; background: #fff; clip-path: polygon(0 0, 100% 0, 100% 30%, 58% 100%, 0 30%); }
.gutter { padding-top: 62px; }
.gutter svg { width: 17px; height: 38px; display: block; fill: #fff; }
```
